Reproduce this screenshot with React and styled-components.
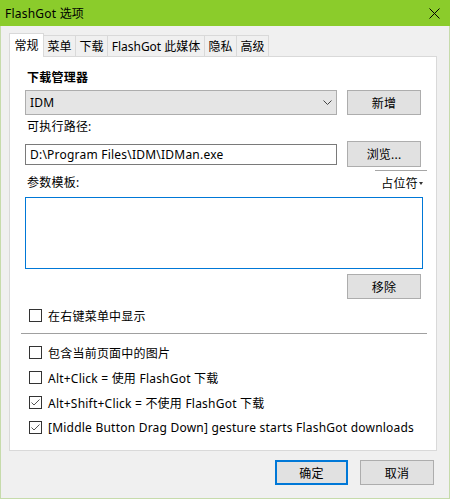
import React from "react";
import styled, { createGlobalStyle } from "styled-components";

const Global = createGlobalStyle`
  html, body {
    margin: 0;
    padding: 0;
    background: #ffffff;
  }
  body {
    font-family: "Noto Sans", "Noto Sans CJK SC", sans-serif;
    font-size: 12px;
    letter-spacing: 0.22px;
    color: #000;
  }
`;

const Window = styled.div`
  width: 450px;
  height: 499px;
  display: flex;
  flex-direction: column;
  box-sizing: border-box;
`;

const TitleBar = styled.div`
  height: 26px;
  flex: none;
  background: #8bcc2b;
  display: flex;
  align-items: center;
  justify-content: space-between;
  padding: 0 10px 0 5px;
  > span {
    font-size: 12px;
    line-height: 16px;
    margin-top: 1px;
  }
`;

const Client = styled.div`
  flex: 1;
  background: #f0f0f0;
  border: 1px solid #c6dbab;
  border-top: none;
  padding: 7px 0 0 8px;
  display: flex;
  flex-direction: column;
`;

const TabStrip = styled.div`
  display: flex;
  align-items: flex-end;
  height: 23px;
  position: relative;
  z-index: 1;
`;

const Tab = styled.div`
  width: ${(p) => p.$w}px;
  height: ${(p) => (p.$active ? 24 : 21)}px;
  margin-bottom: ${(p) => (p.$active ? -1 : 0)}px;
  margin-left: ${(p) => (p.$first ? 0 : -1)}px;
  box-sizing: border-box;
  border: 1px solid #d9d9d9;
  border-bottom: none;
  background: ${(p) => (p.$active ? "#ffffff" : "#f0f0f0")};
  display: flex;
  align-items: center;
  justify-content: center;
  padding-bottom: ${(p) => (p.$active ? 2 : 0)}px;
  white-space: nowrap;
  letter-spacing: 0;
  font-size: 12px;
  position: relative;
  z-index: ${(p) => (p.$active ? 2 : 1)};
`;

const Panel = styled.div`
  width: 428px;
  height: 395px;
  box-sizing: border-box;
  background: #ffffff;
  border: 1px solid #d9d9d9;
  padding: 13px 0 0 15px;
  display: flex;
  flex-direction: column;
`;

const Label = styled.div`
  height: 16px;
  line-height: 16px;
  margin-left: 2px;
  margin-top: ${(p) => p.$mt || 0}px;
  font-weight: ${(p) => (p.$bold ? 700 : 400)};
`;

const Row = styled.div`
  display: flex;
  align-items: center;
  margin-top: ${(p) => p.$mt || 0}px;
  height: ${(p) => p.$h}px;
`;

const Combo = styled.div`
  width: 312px;
  height: 25px;
  box-sizing: border-box;
  background: #e5e5e5;
  border: 1px solid #adadad;
  display: flex;
  align-items: center;
  justify-content: space-between;
  padding: 0 4px 0 4px;
`;

const Input = styled.div`
  width: 312px;
  height: 21px;
  box-sizing: border-box;
  border: 1px solid #7a7a7a;
  background: #fff;
  display: flex;
  align-items: center;
  padding-left: 4px;
`;

const Button = styled.div`
  width: ${(p) => p.$w || 74}px;
  height: ${(p) => p.$h || 25}px;
  box-sizing: border-box;
  background: #e1e1e1;
  border: ${(p) => (p.$default ? "2px solid #0078d7" : "1px solid #adadad")};
  display: flex;
  align-items: center;
  justify-content: center;
  margin-left: ${(p) => p.$ml || 0}px;
  flex: none;
`;

const ParamHeader = styled.div`
  display: flex;
  justify-content: space-between;
  align-items: center;
  width: 402px;
  height: 25px;
  margin-top: 3px;
`;

const MenuButton = styled.div`
  width: 52px;
  height: 25px;
  box-sizing: border-box;
  border-top: 1px solid #a6a6a6;
  display: flex;
  align-items: center;
  justify-content: flex-end;
  padding-right: 4px;
  gap: 1px;
`;

const TextArea = styled.div`
  width: 398px;
  height: 72px;
  box-sizing: border-box;
  border: 1px solid #0078d7;
  margin-top: 2px;
`;

const RightRow = styled.div`
  width: 396px;
  display: flex;
  justify-content: flex-end;
  margin-top: 5px;
`;

const CheckRow = styled.div`
  display: flex;
  align-items: center;
  height: 17px;
  margin-top: ${(p) => p.$mt}px;
  margin-left: 4px;
  gap: 6px;
  white-space: nowrap;
`;

const Box = styled.div`
  width: 13px;
  height: 13px;
  box-sizing: border-box;
  border: 1px solid #333333;
  background: #fff;
  flex: none;
  display: flex;
  svg {
    display: block;
  }
`;

const Divider = styled.div`
  width: 406px;
  height: 1px;
  background: #a0a0a0;
  margin: 9px 0 0 -4px;
`;

const Footer = styled.div`
  display: flex;
  justify-content: flex-end;
  padding: 9px 15px 0 0;
  gap: 12px;
`;

const Check = ({ checked, children, mt }) => (
  <CheckRow $mt={mt}>
    <Box>
      {checked && (
        <svg width="11" height="11" viewBox="0 0 11 11">
          <polyline
            points="1.5,5.5 4,8 9.5,2.5"
            fill="none"
            stroke="#555"
            strokeWidth="1"
          />
        </svg>
      )}
    </Box>
    <span>{children}</span>
  </CheckRow>
);

const tabs = [
  { name: "常规", w: 35, active: true },
  { name: "菜单", w: 33 },
  { name: "下载", w: 33 },
  { name: "FlashGot 此媒体", w: 98 },
  { name: "隐私", w: 33 },
  { name: "高级", w: 33 },
];

export default function App() {
  return (
    <Window>
      <Global />
      <TitleBar>
        <span>FlashGot 选项</span>
        <svg width="11" height="11" viewBox="0 0 11 11">
          <path d="M0.5 0.5 L10.5 10.5 M10.5 0.5 L0.5 10.5" stroke="#000" strokeWidth="1" />
        </svg>
      </TitleBar>
      <Client>
        <TabStrip>
          {tabs.map((t, i) => (
            <Tab key={t.name} $w={t.w} $active={t.active} $first={i === 0}>
              {t.name}
            </Tab>
          ))}
        </TabStrip>
        <Panel>
          <Label $bold>下载管理器</Label>
          <Row $mt={4} $h={25}>
            <Combo>
              <span>IDM</span>
              <svg width="9" height="5" viewBox="0 0 9 5">
                <polyline points="0.5,0.5 4.5,4.5 8.5,0.5" fill="none" stroke="#444" strokeWidth="1" />
              </svg>
            </Combo>
            <Button $ml={10}>新增</Button>
          </Row>
          <Label $mt={4}>可执行路径:</Label>
          <Row $mt={6} $h={26}>
            <Input>D:\Program Files\IDM\IDMan.exe</Input>
            <Button $ml={10} $h={26}>浏览...</Button>
          </Row>
          <ParamHeader>
            <Label>参数模板:</Label>
            <MenuButton>
              <span>占位符</span>
              <svg width="4" height="3" viewBox="0 0 4 3">
                <path d="M0 0 L4 0 L2 3 Z" fill="#333" />
              </svg>
            </MenuButton>
          </ParamHeader>
          <TextArea />
          <RightRow>
            <Button>移除</Button>
          </RightRow>
          <Check mt={8}>在右键菜单中显示</Check>
          <Divider />
          <Check mt={10}>包含当前页面中的图片</Check>
          <Check mt={8}>Alt+Click = 使用 FlashGot 下载</Check>
          <Check mt={8} checked>
            Alt+Shift+Click = 不使用 FlashGot 下载
          </Check>
          <Check mt={8} checked>
            [Middle Button Drag Down] gesture starts FlashGot downloads
          </Check>
        </Panel>
        <Footer>
          <Button $w={73} $default>
            确定
          </Button>
          <Button>取消</Button>
        </Footer>
      </Client>
    </Window>
  );
}
